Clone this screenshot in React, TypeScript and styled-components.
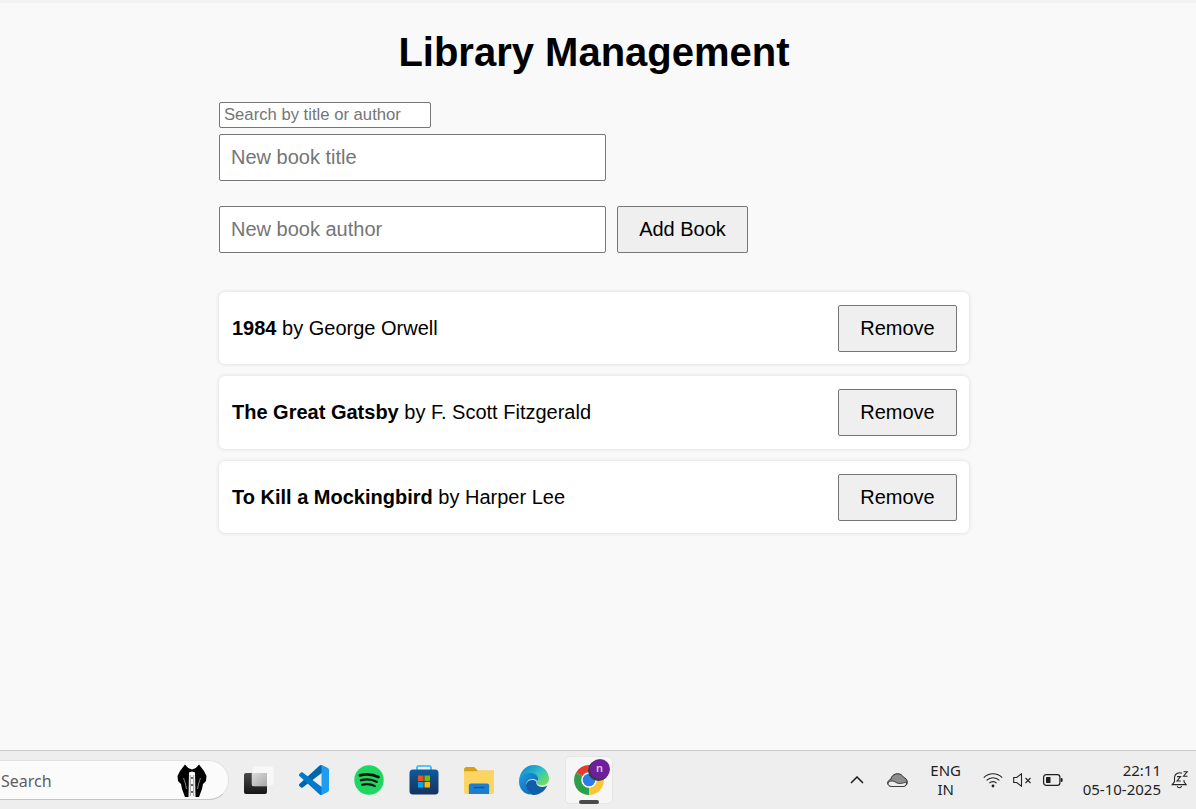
import React from "react";
import styled, { createGlobalStyle } from "styled-components";

const Global = createGlobalStyle`
  html, body { margin: 0; padding: 0; height: 100%; overflow: hidden; }
  body { font-family: "Liberation Sans", Arial, sans-serif; background: #f9f9f9; color: #000; }
  * { box-sizing: border-box; }
`;

const Page = styled.div`
  height: 809px;
  display: flex;
  flex-direction: column;
  background: #f9f9f9;
`;
const TopStrip = styled.div`
  height: 3px;
  background: #f3f3f3;
  flex: none;
`;
const Main = styled.main`
  flex: 1;
  min-height: 0;
  padding-right: 8px;
`;
const Container = styled.div`
  width: 750px;
  margin: 0 auto;
`;
const Title = styled.h1`
  margin: 26px 0 27px;
  font-size: 40px;
  line-height: 46px;
  font-weight: 700;
  text-align: center;
`;
const Form = styled.div`
  display: flex;
  flex-direction: column;
  align-items: flex-start;
`;
const SearchInput = styled.input`
  width: 212px;
  height: 26px;
  padding: 0 4px;
  margin-bottom: 6px;
  font: 16.67px "Liberation Sans", Arial, sans-serif;
  background: #fff;
  border: 1px solid #767676;
  border-radius: 2px;
  &::placeholder { color: #757575; opacity: 1; }
`;
const FieldRow = styled.div`
  display: flex;
  gap: 11px;
  margin-bottom: 25px;
  &:last-child { margin-bottom: 0; }
`;
const TextInput = styled.input`
  width: 387px;
  height: 47px;
  padding: 0 11px;
  font: 20px "Liberation Sans", Arial, sans-serif;
  background: #fff;
  border: 1px solid #767676;
  border-radius: 2px;
  &::placeholder { color: #757575; opacity: 1; }
`;
const Button = styled.button<{ $w: number }>`
  width: ${(p) => p.$w}px;
  height: 47px;
  padding: 0;
  font: 20px "Liberation Sans", Arial, sans-serif;
  color: #000;
  background: #efefef;
  border: 1px solid #767676;
  border-radius: 2px;
`;
const BookList = styled.ul`
  list-style: none;
  margin: 38.8px 0 0;
  padding: 0;
  display: flex;
  flex-direction: column;
  gap: 12px;
`;
const BookCard = styled.li`
  display: flex;
  align-items: center;
  justify-content: space-between;
  height: 72.5px;
  padding: 0 12px 0 13px;
  font-size: 20px;
  background: #fff;
  border-radius: 6px;
  box-shadow: 0 0 4px rgba(0, 0, 0, 0.13);
`;

const Taskbar = styled.footer`
  height: 59px;
  flex: none;
  display: flex;
  align-items: center;
  background: #eeeeee;
  border-top: 1px solid #c9c9c9;
  font-family: "Noto Sans", "Open Sans", sans-serif;
  color: #1f1f1f;
`;
const SearchPill = styled.div`
  width: 249px;
  height: 40px;
  margin-left: -20px;
  padding: 0 21px 0 20px;
  flex: none;
  display: flex;
  align-items: center;
  justify-content: space-between;
  background: #fbfbfb;
  border: 1px solid #e2e2e2;
  border-bottom-color: #c6c6c6;
  border-radius: 20px;
  font-size: 16px;
  color: #5f5f5f;
`;
const SearchLabel = styled.span`
  padding-top: 2px;
`;
const AppIcons = styled.div`
  display: flex;
  align-items: center;
  margin-left: 2.5px;
  flex: none;
`;
const AppSlot = styled.div`
  width: 55px;
  height: 48px;
  display: flex;
  align-items: center;
  justify-content: center;
  position: relative;
`;
const ActiveTile = styled.div`
  position: absolute;
  left: 3.5px;
  top: 0;
  width: 48px;
  height: 48px;
  background: #f6f6f6;
  border: 1px solid #e6e6e6;
  border-radius: 5px;
`;
const RunningBar = styled.div`
  position: absolute;
  left: 17.5px;
  bottom: 0.5px;
  width: 20px;
  height: 4px;
  border-radius: 2px;
  background: #4a4a4a;
`;
const Badge = styled.div`
  position: absolute;
  left: 28px;
  top: 2.5px;
  width: 20px;
  height: 20px;
  border-radius: 50%;
  background: #6f1f9e;
  box-shadow: -1.5px 1.5px 0 0.5px #3a3a48;
  color: #d9c6e6;
  font-size: 11px;
  font-weight: 600;
  line-height: 18px;
  text-align: center;
`;
const AppGlyph = styled.div`
  position: relative;
  display: flex;
`;
const Tray = styled.div`
  flex: 1;
  display: flex;
  align-items: center;
  justify-content: flex-end;
  height: 100%;
`;
const TrayIcon = styled.div<{ $w: number; $mr: number }>`
  width: ${(p) => p.$w}px;
  margin-right: ${(p) => p.$mr}px;
  display: flex;
  justify-content: center;
  flex: none;
`;
const Lang = styled.div`
  width: 40px;
  margin-right: 17px;
  font-size: 15px;
  line-height: 19px;
  text-align: center;
  flex: none;
`;
const Clock = styled.div`
  font-size: 15px;
  line-height: 19px;
  text-align: right;
  flex: none;
  margin-right: 10px;
  margin-top: -1px;
`;

const Tuxedo = () => (
  <svg width="30" height="33" viewBox="0 0 30 33">
    <path d="M8 0.5 L12 5 L12 33 L8 33 L5 25 L4 20 L1 17 L0.5 12 L3 7 Z" fill="#020202" />
    <path d="M22 0.5 L18 5 L18 33 L22 33 L25 25 L26 20 L29 17 L29.5 12 L27 7 Z" fill="#020202" />
    <path d="M6.5 14 L8.5 20 L9.5 25" fill="none" stroke="#d8d8d8" strokeWidth="0.6" />
    <path d="M23.5 14 L21.5 20 L20.5 25" fill="none" stroke="#d8d8d8" strokeWidth="0.6" />
    <path d="M12 8 L18 8 L18.5 33 L11.5 33 Z" fill="#f6f6f6" />
    <path d="M8.5 3 L15 5.5 L21.5 3 L21.5 9.5 L15 7.5 L8.5 9.5 Z" fill="#000" />
    <path d="M13.3 11 v21 M16.7 11 v21" stroke="#8a8a8a" strokeWidth="0.8" />
    <circle cx="15" cy="14" r="0.9" fill="#222" />
    <circle cx="15" cy="21" r="0.9" fill="#222" />
    <circle cx="15" cy="28" r="0.9" fill="#222" />
  </svg>
);
const TaskView = () => (
  <svg width="30" height="28" viewBox="0 0 30 28">
    <defs>
      <linearGradient id="tvd" x1="0" y1="0" x2="0" y2="1">
        <stop offset="0" stopColor="#4a4a4a" />
        <stop offset="1" stopColor="#151515" />
      </linearGradient>
      <linearGradient id="tvo" x1="0" y1="0" x2="1" y2="1">
        <stop offset="0" stopColor="#dcdcdc" />
        <stop offset="1" stopColor="#a8a8a8" />
      </linearGradient>
    </defs>
    <rect x="0" y="7" width="23" height="21" rx="2" fill="url(#tvd)" />
    <rect x="8" y="0" width="22" height="20" rx="2" fill="#f7f7f7" stroke="#e4e4e4" strokeWidth="0.5" />
    <rect x="8" y="7" width="15" height="13" fill="url(#tvo)" />
  </svg>
);
const VSCode = () => (
  <svg width="30" height="30" viewBox="0 0 100 100">
    <path d="M96.46 10.8L75.86.88C73.47-.27 70.62.21 68.75 2.08L1.3 63.58c-1.81 1.65-1.81 4.51 0 6.17l5.51 5c1.49 1.35 3.72 1.45 5.32.24L93.36 13.37C96.09 11.3 100 13.25 100 16.67v-.24c0-2.4-1.38-4.59-3.54-5.63z" fill="#0065a9" />
    <path d="M96.46 89.2l-20.6 9.92c-2.39 1.15-5.24.67-7.11-1.2L1.3 36.42c-1.81-1.65-1.81-4.51 0-6.17l5.51-5c1.49-1.35 3.72-1.45 5.32-.24l81.23 61.62c2.73 2.07 6.64.12 6.64-3.3v.24c0 2.4-1.38 4.59-3.54 5.63z" fill="#007acc" />
    <path d="M75.86 99.13c-2.39 1.15-5.24.66-7.11-1.21C71.06 100.22 75 98.59 75 95.33V4.67c0-3.26-3.94-4.89-6.25-2.59 1.87-1.87 4.72-2.36 7.11-1.21l20.6 9.91c2.17 1.04 3.54 3.23 3.54 5.63v67.17c0 2.4-1.37 4.59-3.54 5.63z" fill="#1f9cf0" />
  </svg>
);
const Spotify = () => (
  <svg width="30" height="30" viewBox="0 0 30 30">
    <circle cx="15" cy="15" r="14.7" fill="#1ed760" />
    <path d="M6 10.4c6-1.7 13-1.2 18.4 1.7" fill="none" stroke="#111" strokeWidth="2.8" strokeLinecap="round" />
    <path d="M7 15.2c5.2-1.4 11-1 15.6 1.6" fill="none" stroke="#111" strokeWidth="2.4" strokeLinecap="round" />
    <path d="M8 19.8c4.4-1.1 9.2-.8 13 1.3" fill="none" stroke="#111" strokeWidth="2" strokeLinecap="round" />
  </svg>
);
const Store = () => (
  <svg width="30" height="30" viewBox="0 0 30 30">
    <defs>
      <linearGradient id="stb" x1="0" y1="0" x2="0" y2="1">
        <stop offset="0" stopColor="#0f5a9c" />
        <stop offset="1" stopColor="#16335f" />
      </linearGradient>
    </defs>
    <path d="M8 6V2.5C8 1.5 8.7 1 9.5 1h11c.8 0 1.5.5 1.5 1.5V6" fill="none" stroke="#29b6f0" strokeWidth="1.6" />
    <rect x="0.5" y="4.5" width="29" height="25" rx="3.5" fill="url(#stb)" />
    <rect x="9" y="10.5" width="5.5" height="5.5" fill="#f25022" />
    <rect x="15.5" y="10.5" width="5.5" height="5.5" fill="#7fba00" />
    <rect x="9" y="17" width="5.5" height="5.5" fill="#00a4ef" />
    <rect x="15.5" y="17" width="5.5" height="5.5" fill="#ffb900" />
  </svg>
);
const Folder = () => (
  <svg width="30" height="27" viewBox="0 0 31 28">
    <path d="M0 2.5C0 1 1 0 2.5 0h8l4 4H31v4H0z" fill="#d9a10f" />
    <path d="M0 4.5h12.5L15 3.5h14.5C30.4 3.5 31 4.2 31 5v21c0 1-.8 2-2 2H2c-1.2 0-2-1-2-2z" fill="#fcd462" />
    <path d="M5 19c0-1.1.9-2 2-2h17c1.1 0 2 .9 2 2v9H5z" fill="#1a7fd0" />
    <rect x="10" y="20.5" width="11" height="1.6" fill="#0d5a9e" />
  </svg>
);
const Edge = () => (
  <svg width="30" height="30" viewBox="0 0 31 31">
    <defs>
      <linearGradient id="edg" x1="0.2" y1="0" x2="1" y2="0.7">
        <stop offset="0" stopColor="#0f88d6" />
        <stop offset="0.55" stopColor="#2fc2c4" />
        <stop offset="1" stopColor="#6fdc5f" />
      </linearGradient>
      <linearGradient id="edb" x1="0" y1="0" x2="1" y2="1">
        <stop offset="0" stopColor="#1b9de2" />
        <stop offset="1" stopColor="#0b5fae" />
      </linearGradient>
    </defs>
    <path d="M15.5 0C24.5 0 31 6.5 31 14.5c0 3.8-3 6.5-7 6.5-3 0-5.5-1-5.5-2.5 0-1 1.5-1.5 1.5-3.8C20 11 17 8.5 13 8.5 7 8.5 2 12 0 17 .3 7.5 6.5 0 15.5 0z" fill="url(#edg)" />
    <path d="M0 17c1-5.5 6.5-9 12-9 4.5 0 8 3 8 6.5 0 1-.4 1.7-1 2.4-.6-1.2-2.6-2.4-5-2.4-4 0-6.8 3-6.8 6.8 0 3.7 2.2 7 6 9.2C6 31 0 25 0 17z" fill="url(#edb)" />
    <path d="M13.2 30.5c-3.8-2-6-5.4-6-8.8 0-3.4 2.6-6.2 6.5-6.2 1.8 0 3.4.6 4.6 1.6-1.3 2.4.9 5.6 6 5.6 2 0 3.6-.4 5-1.4C26.7 27 21.5 31 15.5 31c-.8 0-1.5 0-2.3-.5z" fill="#0e5fa8" />
  </svg>
);
const Chrome = () => (
  <svg width="30" height="30" viewBox="0 0 31 31">
    <path d="M15.5 15.5 L2.1 7.75 A15.5 15.5 0 0 1 28.9 7.75 Z" fill="#e33b2e" />
    <path d="M15.5 15.5 L28.9 7.75 A15.5 15.5 0 0 1 15.5 31 Z" fill="#fbc62f" />
    <path d="M15.5 15.5 L15.5 31 A15.5 15.5 0 0 1 2.1 7.75 Z" fill="#2f9e48" />
    <circle cx="15.5" cy="15.5" r="8" fill="#fff" />
    <circle cx="15.5" cy="15.5" r="6.5" fill="#2f7ce8" />
  </svg>
);
const Chevron = () => (
  <svg width="14" height="8" viewBox="0 0 14 8">
    <path d="M1 7l6-6 6 6" fill="none" stroke="#1a1a1a" strokeWidth="1.5" />
  </svg>
);
const Cloud = () => (
  <svg width="21" height="14" viewBox="0 0 21 14">
    <path d="M5 13.5C2.5 13.5.7 12 .7 10c0-1.8 1.3-3.2 3-3.5C4.5 3 7 .7 10.5.7c2.7 0 4.8 1.3 6 3.6 2 .6 3.8 2.4 3.8 5 0 2.4-1.8 4.2-4.2 4.2z" fill="#8d8d8d" stroke="#2a2a2a" strokeWidth="1" />
    <path d="M1 10c2-3 6-2 8-.5 2.5 1.8 6 1 10.5-.5.5 3-1.5 4.5-3.5 4.5H5C2.8 13.5 1 12.2 1 10z" fill="#eeeeee" stroke="#2a2a2a" strokeWidth="0.8" />
  </svg>
);
const Wifi = () => (
  <svg width="20" height="16" viewBox="0 0 20 16">
    <g fill="none" stroke="#222" strokeWidth="1.1">
      <path d="M.8 5.6a13 13 0 0 1 18.4 0" />
      <path d="M3.6 8.4a9 9 0 0 1 12.8 0" />
      <path d="M6.4 11.2a5 5 0 0 1 7.2 0" />
    </g>
    <circle cx="10" cy="14" r="1.4" fill="#222" />
  </svg>
);
const Mute = () => (
  <svg width="20" height="14" viewBox="0 0 20 14">
    <path d="M.7 4.5h3L8.5.8v12.4L3.7 9.5h-3z" fill="none" stroke="#222" strokeWidth="1.1" />
    <path d="M12.5 5l5 5m0-5l-5 5" fill="none" stroke="#222" strokeWidth="1.1" />
  </svg>
);
const Battery = () => (
  <svg width="20" height="12" viewBox="0 0 20 12">
    <rect x="0.6" y="0.6" width="16.3" height="10.8" rx="2.6" fill="none" stroke="#1f1f1f" strokeWidth="1.2" />
    <rect x="3" y="3" width="4.5" height="6" rx="0.6" fill="#1f1f1f" />
    <rect x="17.6" y="4" width="2" height="4" rx="1" fill="#1f1f1f" />
  </svg>
);
const Bell = () => (
  <svg width="18" height="18" viewBox="0 0 18 18">
    <path d="M11 2.3C9.5 1.6 8 1.6 6.5 2.2 4.4 3 3.5 5 3.5 7.2v3.5L1.2 13.6h14l-2.2-2.9V9" fill="none" stroke="#222" strokeWidth="1.05" />
    <path d="M6.2 15.2a2.3 2.3 0 0 0 4.4 0" fill="none" stroke="#222" strokeWidth="1.05" />
    <path d="M6 5.6h3.6L6 10h3.8M12.5 .8h3.7l-3.7 4.4h4" fill="none" stroke="#222" strokeWidth="1.05" />
  </svg>
);

const books = [
  { title: "1984", author: "George Orwell" },
  { title: "The Great Gatsby", author: "F. Scott Fitzgerald" },
  { title: "To Kill a Mockingbird", author: "Harper Lee" },
];

export default function App() {
  return (
    <Page>
      <Global />
      <TopStrip />
      <Main>
        <Container>
          <Title>Library Management</Title>
          <Form>
            <SearchInput placeholder="Search by title or author" />
            <FieldRow>
              <TextInput placeholder="New book title" />
            </FieldRow>
            <FieldRow>
              <TextInput placeholder="New book author" />
              <Button $w={131}>Add Book</Button>
            </FieldRow>
          </Form>
          <BookList>
            {books.map((b) => (
              <BookCard key={b.title}>
                <span>
                  <strong>{b.title}</strong> by {b.author}
                </span>
                <Button $w={119}>Remove</Button>
              </BookCard>
            ))}
          </BookList>
        </Container>
      </Main>
      <Taskbar>
        <SearchPill>
          <SearchLabel>Search</SearchLabel>
          <Tuxedo />
        </SearchPill>
        <AppIcons>
          <AppSlot><TaskView /></AppSlot>
          <AppSlot><VSCode /></AppSlot>
          <AppSlot><Spotify /></AppSlot>
          <AppSlot><Store /></AppSlot>
          <AppSlot><Folder /></AppSlot>
          <AppSlot><Edge /></AppSlot>
          <AppSlot>
            <ActiveTile />
            <AppGlyph><Chrome /></AppGlyph>
            <Badge>n</Badge>
            <RunningBar />
          </AppSlot>
        </AppIcons>
        <Tray>
          <TrayIcon $w={14} $mr={23}><Chevron /></TrayIcon>
          <TrayIcon $w={21} $mr={17.5}><Cloud /></TrayIcon>
          <Lang>ENG<br />IN</Lang>
          <TrayIcon $w={20} $mr={10}><Wifi /></TrayIcon>
          <TrayIcon $w={20} $mr={10}><Mute /></TrayIcon>
          <TrayIcon $w={20} $mr={20}><Battery /></TrayIcon>
          <Clock>22:11<br />05-10-2025</Clock>
          <TrayIcon $w={18} $mr={7}><Bell /></TrayIcon>
        </Tray>
      </Taskbar>
    </Page>
  );
}
